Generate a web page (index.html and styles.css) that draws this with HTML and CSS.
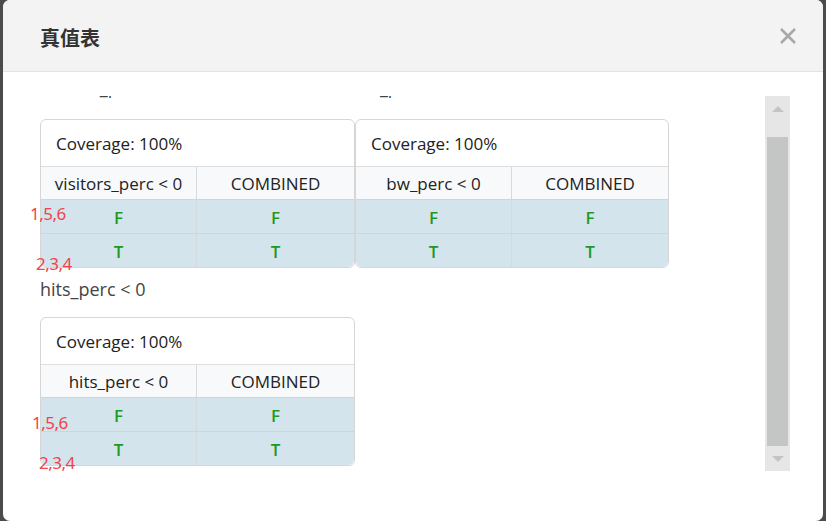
FILE: index.html
```html
<!DOCTYPE html>
<html lang="zh">
<head>
<meta charset="utf-8">
<title>真值表</title>
<link rel="stylesheet" href="styles.css">
</head>
<body>
<div class="modal">
  <div class="modal-header">
    <h4 class="modal-title">真值表</h4>
    <svg class="close" width="18" height="18" viewBox="0 0 18 18" aria-label="close">
      <path d="M2 2 L16 16 M16 2 L2 16" stroke="#a8a8a8" stroke-width="2.6" fill="none"/>
    </svg>
  </div>
  <div class="modal-body">
    <div class="scroller">
      <div class="content">
        <div class="group-row">
          <div class="group">
            <div class="cond scrolled">visitors_perc &lt; 0</div>
            <div class="card">
              <div class="coverage">Coverage: 100%</div>
              <div class="grid">
                <div class="th">visitors_perc &lt; 0</div><div class="th">COMBINED</div>
                <div class="td">F</div><div class="td">F</div>
                <div class="td last">T</div><div class="td last">T</div>
              </div>
              <span class="mark m1">1,5,6</span>
              <span class="mark m2">2,3,4</span>
            </div>
          </div>
          <div class="group">
            <div class="cond scrolled">bw_perc &lt; 0</div>
            <div class="card">
              <div class="coverage">Coverage: 100%</div>
              <div class="grid">
                <div class="th">bw_perc &lt; 0</div><div class="th">COMBINED</div>
                <div class="td">F</div><div class="td">F</div>
                <div class="td last">T</div><div class="td last">T</div>
              </div>
            </div>
          </div>
        </div>
        <div class="group-row">
          <div class="group">
            <div class="cond">hits_perc &lt; 0</div>
            <div class="card">
              <div class="coverage">Coverage: 100%</div>
              <div class="grid">
                <div class="th">hits_perc &lt; 0</div><div class="th">COMBINED</div>
                <div class="td">F</div><div class="td">F</div>
                <div class="td last">T</div><div class="td last">T</div>
              </div>
              <span class="mark m3">1,5,6</span>
              <span class="mark m4">2,3,4</span>
            </div>
          </div>
        </div>
      </div>
    </div>
    <div class="vscroll">
      <div class="arrow up"></div>
      <div class="thumb"></div>
      <div class="arrow down"></div>
    </div>
  </div>
</div>
</body>
</html>
```
FILE: styles.css
```css
html, body {
  margin: 0;
  padding: 0;
  height: 100%;
}
body {
  background: #4b4b4b;
  font-family: "Open Sans", "Noto Sans", "Noto Sans CJK SC", sans-serif;
  color: #212529;
  overflow: hidden;
}
.modal {
  margin: 0 3px 0 3px;
  height: 521px;
  background: #fff;
  border-radius: 7px;
  overflow: hidden;
  display: flex;
  flex-direction: column;
}
.modal-header {
  height: 71px;
  flex: none;
  background: #f3f3f3;
  border-bottom: 1px solid #e3e3e3;
  display: flex;
  align-items: center;
  justify-content: space-between;
  padding: 0 26px 0 37px;
}
.modal-title {
  margin: 0;
  font-family: "Noto Sans CJK SC", sans-serif;
  font-size: 20px;
  font-weight: 700;
  color: #333;
  padding-top: 4px;
}
.close {
  display: block;
  margin-top: 1px;
}
.modal-body {
  flex: 1;
  display: flex;
  padding: 24px 33px 0 21px;
  align-items: flex-start;
}
.scroller {
  flex: 1;
  height: 377px;
  overflow: hidden;
  padding-left: 16px;
}
.content {
  margin-top: -20px;
}
.group-row {
  display: flex;
  margin-bottom: 10px;
}
.cond {
  font-size: 18px;
  line-height: 22px;
  height: 22px;
  color: #444;
  margin-bottom: 17px;
  white-space: nowrap;
}
.cond.scrolled {
  margin-bottom: 21px;
}
.card {
  position: relative;
  width: 313px;
  border: 1px solid #d6d6d6;
  border-radius: 6px;
  background: #fff;
}
.group + .group .card {
  width: 312px;
}
.coverage {
  height: 46px;
  line-height: 48px;
  padding-left: 15px;
  font-size: 17px;
  color: #222;
}
.grid {
  display: grid;
  grid-template-columns: 156px 1fr;
  border-radius: 0 0 6px 6px;
  overflow: hidden;
}
.th {
  height: 32px;
  line-height: 34px;
  background: #f8f9fa;
  border-top: 1px solid #dedede;
  text-align: center;
  font-size: 17px;
  color: #222;
}
.td {
  height: 33px;
  line-height: 35px;
  background: #d4e4ec;
  border-top: 1px solid #cdd6da;
  text-align: center;
  font-size: 17px;
  font-weight: 600;
  color: #1f991f;
}
.th:nth-child(odd), .td:nth-child(odd) {
  border-right: 1px solid #d6dadc;
}
.mark {
  position: absolute;
  font-family: "Noto Sans", sans-serif;
  font-size: 17px;
  color: #f2434b;
  line-height: 20px;
  letter-spacing: -0.5px;
}
.m1 { left: -11px; top: 84px; }
.m2 { left: -5px; top: 134px; }
.m3 { left: -9px; top: 95px; }
.m4 { left: -2px; top: 135px; }
.vscroll {
  width: 25px;
  height: 375px;
  background: #e5e6e5;
  display: flex;
  flex-direction: column;
  align-items: center;
  flex: none;
}
.arrow {
  height: 41px;
  width: 100%;
  display: flex;
  align-items: center;
  justify-content: center;
  flex: none;
}
.arrow.up::before {
  content: "";
  border-left: 6px solid transparent;
  border-right: 6px solid transparent;
  border-bottom: 6px solid #c2c5c3;
  margin-top: -16px;
}
.arrow.down {
  height: 25px;
}
.arrow.down::before {
  content: "";
  border-left: 6px solid transparent;
  border-right: 6px solid transparent;
  border-top: 6px solid #c2c5c3;
}
.thumb {
  width: 21px;
  flex: 1;
  background: #c3c6c4;
}
```
